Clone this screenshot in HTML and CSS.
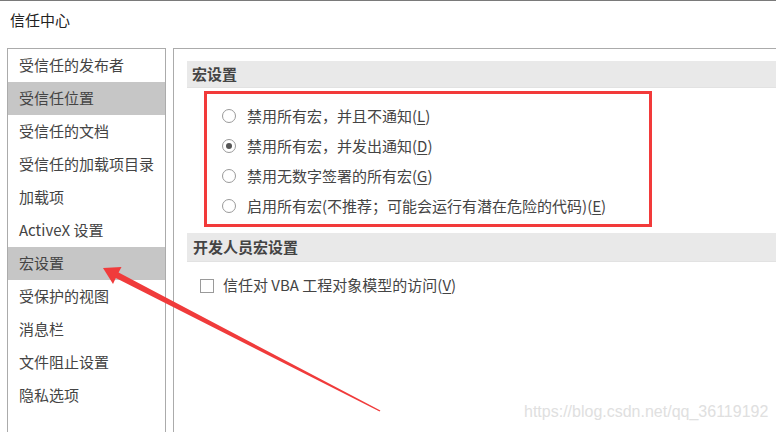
FILE: index.html
```html
<!DOCTYPE html>
<html lang="zh-CN">
<head>
    <meta charset="UTF-8">
    <meta name="viewport" content="width=device-width, initial-scale=1.0">
    <title>信任中心</title>
    <link rel="stylesheet" href="styles.css">
</head>
<body>

    <div class="dialog">
        <div class="title">信任中心</div>

        <div class="main">
            <ul class="nav">
                <li>受信任的发布者</li>
                <li class="active">受信任位置</li>
                <li>受信任的文档</li>
                <li>受信任的加载项目录</li>
                <li>加载项</li>
                <li>ActiveX 设置</li>
                <li class="active">宏设置</li>
                <li>受保护的视图</li>
                <li>消息栏</li>
                <li>文件阻止设置</li>
                <li>隐私选项</li>
            </ul>

            <div class="content">
                <div class="section-head">宏设置</div>
                <div class="highlight">
                    <label class="option"><input type="radio" name="macro"><span>禁用所有宏，并且不通知(<u>L</u>)</span></label>
                    <label class="option"><input type="radio" name="macro" checked><span>禁用所有宏，并发出通知(<u>D</u>)</span></label>
                    <label class="option"><input type="radio" name="macro"><span>禁用无数字签署的所有宏(<u>G</u>)</span></label>
                    <label class="option"><input type="radio" name="macro"><span>启用所有宏(不推荐；可能会运行有潜在危险的代码)(<u>E</u>)</span></label>
                </div>

                <div class="section-head dev">开发人员宏设置</div>
                <label class="check"><input type="checkbox"><span>信任对 VBA 工程对象模型的访问(<u>V</u>)</span></label>
            </div>
        </div>
    </div>

    <!-- annotation arrow pointing at 宏设置 -->
    <svg class="arrow" width="776" height="432" viewBox="0 0 776 432">
        <polygon fill="#f03b3b" points="103,268 121.5,267 118.6,272.6 380.4,410.6 379.6,411.4 115.8,278 113,284"/>
    </svg>

    <div class="watermark">https://blog.csdn.net/qq_36119192</div>

</body>
</html>
```

FILE: styles.css
```css
* { margin: 0; padding: 0; box-sizing: border-box; }

body {
    font-family: "Noto Sans CJK SC", "Noto Sans", sans-serif;
    font-size: 15px;
    color: #444;
    background: #fff;
    width: 776px;
    height: 432px;
    overflow: hidden;
    position: relative;
}

.dialog {
    height: 432px;
    border-top: 1px solid #7a7a7a;
    display: flex;
    flex-direction: column;
}

.title {
    height: 47px;
    padding: 8px 0 0 10px;
    font-size: 15px;
    color: #222;
    line-height: 22px;
}

.main {
    flex: 1;
    display: flex;
    gap: 7px;
    padding-left: 7px;
}

.nav {
    list-style: none;
    width: 159px;
    border: 1px solid #ababab;
    border-bottom: none;
}

.nav li {
    height: 33px;
    line-height: 31px;
    padding: 0 0 2px 11px;
    white-space: nowrap;
}

.nav li.active {
    background: #c6c6c6;
}

.content {
    flex: 1;
    border-left: 1px solid #ababab;
    border-top: 1px solid #ababab;
    padding: 12px 0 0 13px;
}

.section-head {
    height: 27px;
    line-height: 26px;
    padding-left: 5px;
    background: #e9e9e9;
    border-bottom: 1px solid #e2e2e2;
    font-weight: bold;
    color: #444;
}

.section-head.dev {
    margin-top: 6px;
    height: 29px;
    line-height: 28px;
    padding-left: 6px;
}

.highlight {
    margin: 3px 0 0 17px;
    width: 448px;
    height: 136px;
    border: 3px solid #f23a3a;
    padding: 7px 0 0 15px;
}

.option {
    display: flex;
    align-items: center;
    height: 30px;
    gap: 11px;
    white-space: nowrap;
}

.option span,
.check span {
    padding-bottom: 2px;
}

.option input {
    appearance: none;
    width: 14px;
    height: 14px;
    border: 1px solid #9a9a9a;
    border-radius: 50%;
    background: #fff;
    display: grid;
    place-items: center;
}

.option input:checked::after {
    content: "";
    width: 6px;
    height: 6px;
    border-radius: 50%;
    background: #555;
}

.check {
    display: flex;
    align-items: center;
    gap: 9px;
    margin: 12px 0 0 13px;
    white-space: nowrap;
}

.check input {
    appearance: none;
    width: 14px;
    height: 14px;
    border: 1px solid #9a9a9a;
    background: #fff;
}

u {
    text-underline-offset: 2px;
}

.arrow {
    position: absolute;
    left: 0;
    top: 0;
    pointer-events: none;
}

.watermark {
    position: absolute;
    left: 524px;
    top: 403px;
    font-family: "Liberation Sans", Arial, sans-serif;
    font-size: 16px;
    color: #e0e0e0;
}
```
